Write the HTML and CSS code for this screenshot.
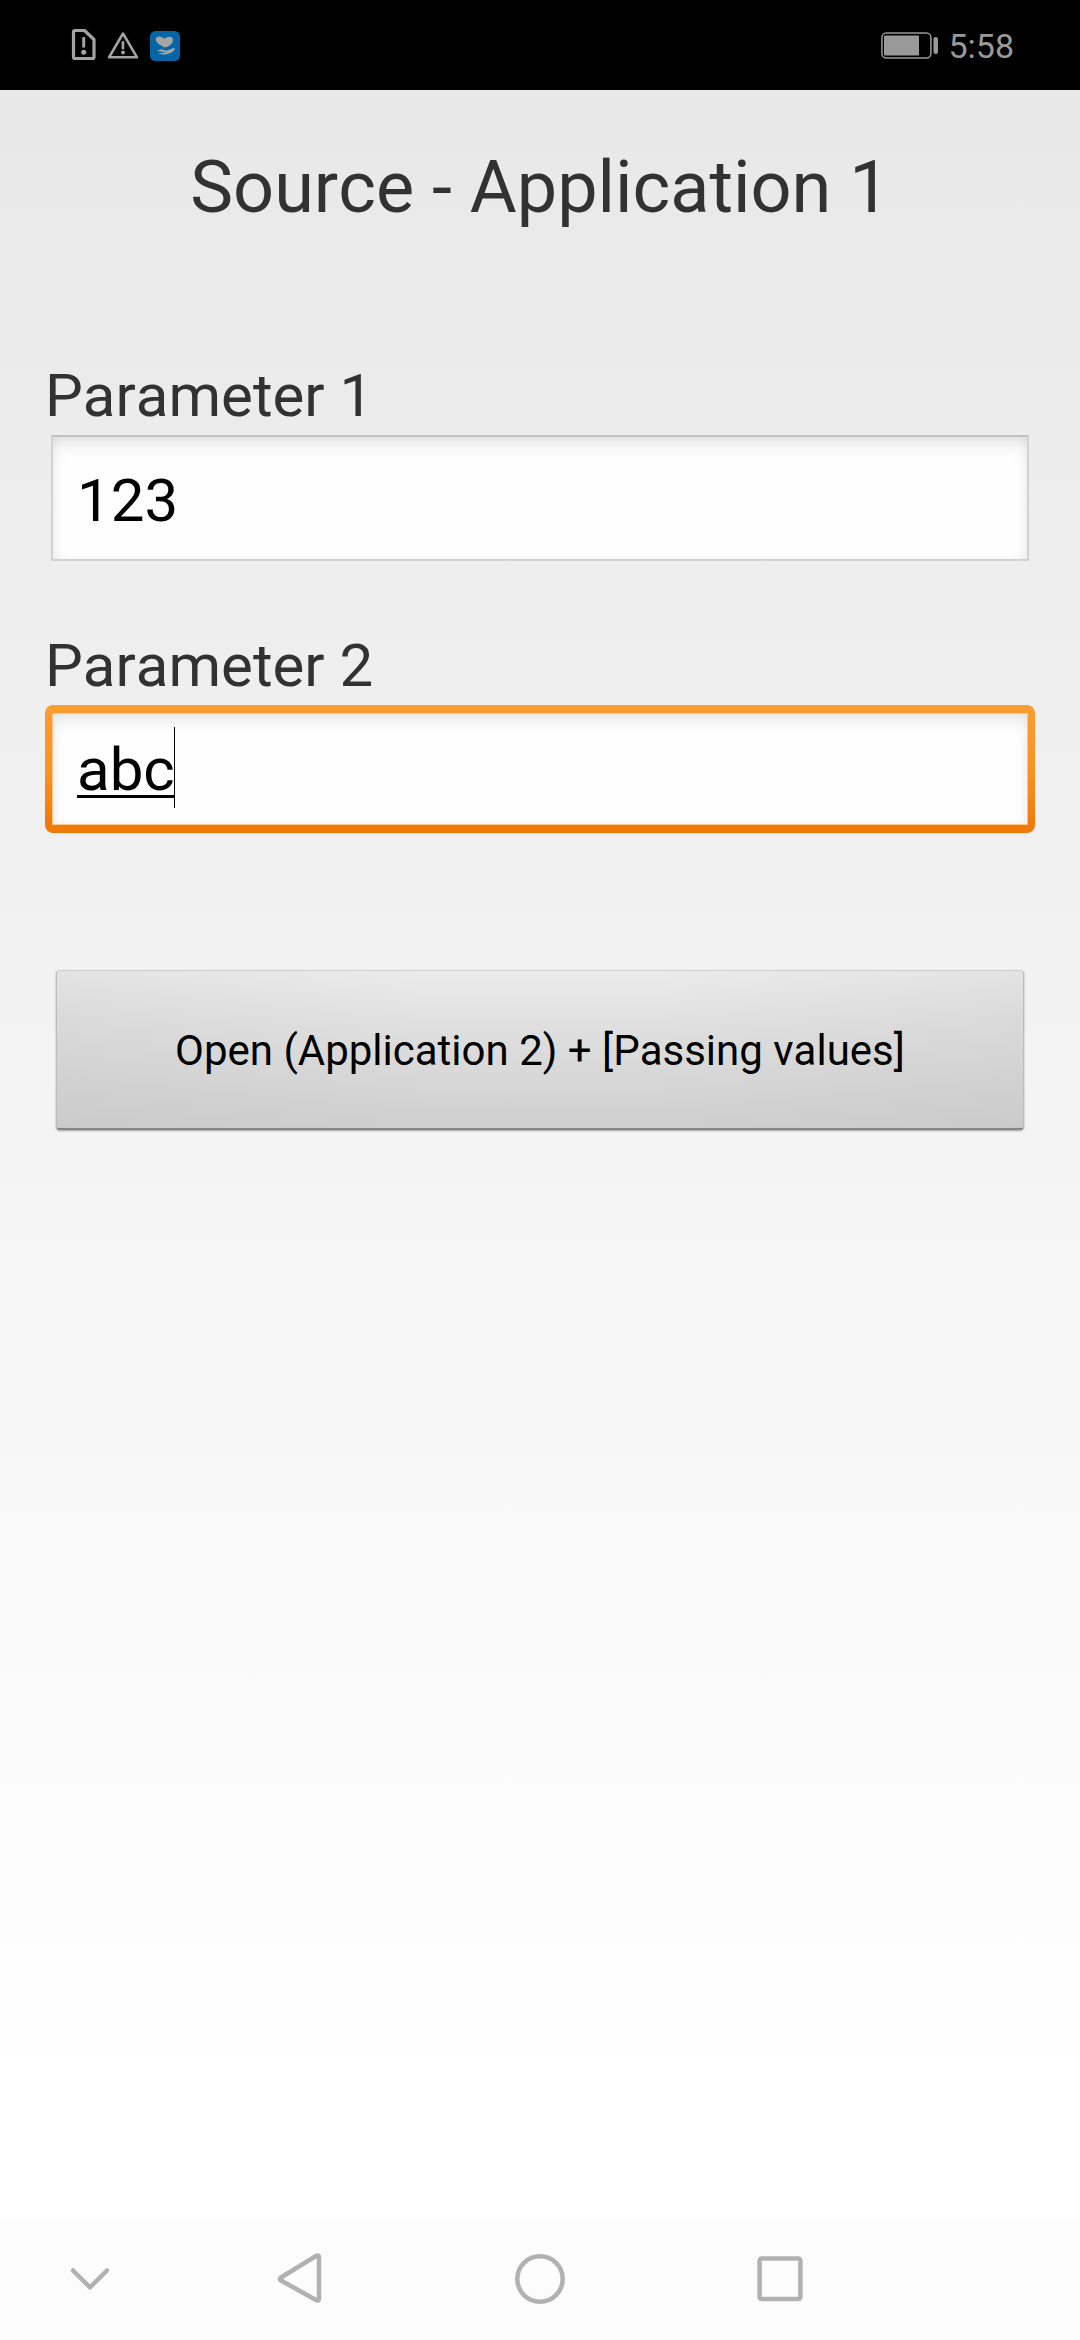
FILE: index.html
```html
<!DOCTYPE html>
<html lang="en">
<head>
<meta charset="utf-8">
<title>Source - Application 1</title>
<link rel="stylesheet" href="styles.css">
</head>
<body>
<header class="status">
  <div class="notices">
    <svg width="120" height="90" viewBox="0 0 120 90">
      <g fill="none" stroke="#a3a3a3" stroke-linejoin="round">
        <path d="M5 30.5H14.5L24 39.500V57Q24 58.500 22.500 58.500H5Q3.500 58.500 3.500 57V32Q3.500 30.500 5 30.500Z" stroke-width="3.200"/>
        <path d="M53 33.500L67 57.300H39Z" stroke-width="2.600"/>
      </g>
      <g fill="#a3a3a3">
        <rect x="12.200" y="36.800" width="3" height="11" rx="1.500"/><circle cx="13.700" cy="52.200" r="2.500"/>
        <rect x="51.600" y="41" width="2.700" height="8.500" rx="1.300"/><circle cx="53" cy="52.500" r="1.900"/>
      </g>
      <rect x="80" y="31" width="30" height="30" rx="5.500" fill="#0565a5"/>
      <path d="M94.500 47.500C90 45 85.800 42.500 85.800 39.500C85.800 36 91.500 35.500 94.200 38.800C98 35.500 103 36 103 40C103 43.500 98.500 47.500 94.500 47.500Z" fill="#a5a5a5"/>
      <path d="M87 51C91 49 94 49.300 95.500 51L103.500 48C105.500 47.500 105 49.500 103.500 51C100 54.500 94 55.500 88 53.500C91 53.300 94 53.200 95.500 52.300C93.500 52 90 51.500 87 51Z" fill="#a5a5a5"/>
    </svg>
  </div>
  <div class="indicators">
    <svg width="60" height="30" viewBox="0 0 60 30">
      <rect x="2.900" y="2.900" width="49" height="25.200" rx="4.500" fill="none" stroke="#999" stroke-width="1.500"/>
      <rect x="5" y="5.500" width="35" height="20" rx="1" fill="#999"/>
      <rect x="54.500" y="7" width="4.500" height="17" rx="2.200" fill="#999"/>
    </svg>
    <span class="clock">5:58</span>
  </div>
</header>
<main class="screen">
  <h1 class="title">Source - Application 1</h1>
  <section class="field">
    <div class="label">Parameter 1</div>
    <div class="input"><span>123</span></div>
  </section>
  <section class="field">
    <div class="label">Parameter 2</div>
    <div class="input focused"><div class="well"><span class="composing">abc</span><i class="caret"></i></div></div>
  </section>
  <button class="open">Open (Application 2) + [Passing values]</button>
</main>
<nav class="navbar">
  <svg width="60" height="60" viewBox="0 0 60 60"><path d="M13 21.500L30 38.300L47 21.500"/></svg>
  <svg width="60" height="60" viewBox="0 0 60 60"><path d="M49 8.500V49.500Q49 52.500 46 51L11 31.500Q8.500 30 11 28.500L46 7Q49 5.500 49 8.500Z"/></svg>
  <svg width="60" height="60" viewBox="0 0 60 60"><circle cx="30" cy="30" r="22.700"/></svg>
  <svg width="60" height="60" viewBox="0 0 60 60"><rect x="9.600" y="9.500" width="40.800" height="40.400" rx="2"/></svg>
</nav>
</body>
</html>
```
FILE: styles.css
```css
* { box-sizing: border-box; }
body {
  margin: 0;
  width: 1080px;
  height: 2340px;
  display: flex;
  flex-direction: column;
  overflow: hidden;
  font-family: Roboto, sans-serif;
  font-kerning: none;
  background: #fff;
}
.status {
  height: 90px;
  background: #000;
  display: flex;
  justify-content: space-between;
  padding: 0 66px 0 70px;
}
.notices, .status svg { display: block; }
.indicators { display: flex; align-items: flex-start; padding-top: 30px; gap: 9px; }
.clock { font-size: 34px; line-height: 40px; margin-top: -4px; color: #999; }
.screen {
  flex: 1;
  display: flex;
  flex-direction: column;
  padding: 56px 45px 0;
  background: linear-gradient(#e8e8e8, #fff 94%);
}
.title {
  margin: 0 0 131px;
  font-size: 72px;
  font-weight: 400;
  line-height: 84px;
  color: #323232;
  text-align: center;
}
.field { height: 270px; }
.label { font-size: 60px; line-height: 70px; color: #323232; }
.input {
  margin: 4px 6px 0;
  height: 126px;
  padding: 29px 24px;
  border: 2px solid #d2d2d2;
  border-top-color: #c2c2c2;
  background: #fefefe;
  box-shadow: inset 0 9px 18px -4px rgba(0, 0, 0, .13), inset 0 0 9px rgba(0, 0, 0, .035);
  font-size: 60px;
  line-height: 70px;
  color: #000;
}
.input.focused {
  margin: 4px 0 0;
  height: 128px;
  padding: 9px 8px;
  border: 0;
  border-radius: 8px;
  background: linear-gradient(#fb9d30, #f99424 50%, #ef7909 95%);
  box-shadow: none;
}
.well {
  height: 110px;
  padding: 8px 24px;
  display: flex;
  background: #fefefe;
  box-shadow: inset 0 9px 18px -4px rgba(0, 0, 0, .1), inset 0 0 9px rgba(0, 0, 0, .035), 0 0 0 1px #fcc68b;
}
.composing {
  height: 76px;
  padding-top: 13px;
  border-bottom: 3px solid #000;
}
.caret { width: 1px; height: 81px; margin: 5px 0 0 -1px; background: #000; }
.open {
  margin: 69px 11px 0;
  height: 160px;
  padding: 3px 0 0;
  border: 1px solid #bcbcbc;
  border-top-color: #cfcfcf;
  border-bottom: 2px solid #858585;
  border-radius: 4px;
  background: linear-gradient(90deg, rgba(170, 170, 170, .12), rgba(200, 200, 200, 0) 38%, rgba(200, 200, 200, 0) 62%, rgba(170, 170, 170, .12)), linear-gradient(#ebebeb, #dedede 40%, #cfcfcf);
  box-shadow: 0 1px 2px rgba(0, 0, 0, .35);
  font: 42px/50px Roboto, sans-serif;
  font-kerning: none;
  color: #000;
}
.navbar {
  height: 122px;
  background: #fcfcfc;
  display: flex;
  gap: 180px;
  padding: 31px 60px;
}
.navbar svg:first-child { margin-right: -30px; }
.navbar path, .navbar circle, .navbar rect {
  fill: none;
  stroke: #b1b1b1;
  stroke-width: 4.5;
  stroke-linecap: round;
  stroke-linejoin: round;
}
```
